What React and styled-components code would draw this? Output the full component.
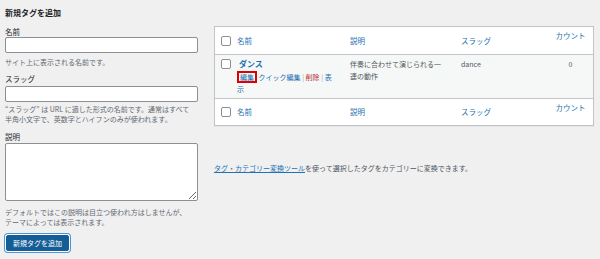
import React from 'react'
import styled, { createGlobalStyle } from 'styled-components'

const GlobalStyle = createGlobalStyle`
    html, body {
        margin: 0;
        padding: 0;
        background: #f0f0f1;
    }
    body {
        font-family: "Noto Sans CJK JP", "Noto Sans", sans-serif;
        color: #1d2327;
        width: 600px;
        height: 259px;
        overflow: hidden;
    }
`

const App = () => {
    return (
        <>
            <GlobalStyle />
            <Page>
                <FormCol>
                    <Heading>新規タグを追加</Heading>
                    <Field top={9}>
                        <Label>名前</Label>
                        <Input type="text" />
                        <Help top={4}>サイト上に表示される名前です。</Help>
                    </Field>
                    <Field top={7}>
                        <Label gap={2}>スラッグ</Label>
                        <Input type="text" />
                        <Help top={2}>
                            “スラッグ” は URL に適した形式の名前です。通常はすべて<br />
                            半角小文字で、英数字とハイフンのみが使われます。
                        </Help>
                    </Field>
                    <Field top={8}>
                        <Label gap={1}>説明</Label>
                        <TextArea />
                        <Help top={6}>
                            デフォルトではこの説明は目立つ使われ方はしませんが、<br />
                            テーマによっては表示されます。
                        </Help>
                    </Field>
                    <SubmitButton>新規タグを追加</SubmitButton>
                </FormCol>

                <ListCol>
                    <Table>
                        <HeadRow>
                            <CheckCell><Check /></CheckCell>
                            <HeadCell>名前</HeadCell>
                            <HeadCell>説明</HeadCell>
                            <HeadCell>スラッグ</HeadCell>
                            <CountHead>カウント</CountHead>
                        </HeadRow>
                        <BodyRow>
                            <CheckCell top><Check /></CheckCell>
                            <NameCell>
                                <RowTitle>ダンス</RowTitle>
                                <Actions>
                                    <Marked>編集</Marked>{' '}
                                    <ActionLink>クイック編集</ActionLink>
                                    <Sep> | </Sep>
                                    <ActionLink danger>削除</ActionLink>
                                    <Sep> | </Sep>
                                    <ActionLink>表<br />示</ActionLink>
                                </Actions>
                            </NameCell>
                            <TextCell>伴奏に合わせて演じられる一<br />連の動作</TextCell>
                            <TextCell>dance</TextCell>
                            <CountCell>0</CountCell>
                        </BodyRow>
                        <FootRow>
                            <CheckCell><Check /></CheckCell>
                            <HeadCell>名前</HeadCell>
                            <HeadCell>説明</HeadCell>
                            <HeadCell>スラッグ</HeadCell>
                            <CountHead>カウント</CountHead>
                        </FootRow>
                    </Table>
                    <Note>
                        <NoteLink>タグ・カテゴリー変換ツール</NoteLink>を使って選択したタグをカテゴリーに変換できます。
                    </Note>
                </ListCol>
            </Page>
        </>
    )
}

export default App


const Page = styled.div`
    display: flex;
    align-items: flex-start;
    padding: 8px 0 0 5px;
    gap: 16px;
`

const FormCol = styled.div`
    width: 193px;
    display: flex;
    flex-direction: column;
`

const Heading = styled.h2`
    margin: 0;
    font-size: 8px;
    line-height: 10px;
    font-weight: 700;
`

const Field = styled.div`
    display: flex;
    flex-direction: column;
    margin-top: ${props => props.top}px;
`

const Label = styled.label`
    font-size: 7.5px;
    line-height: 10px;
    margin-bottom: ${props => props.gap || 0}px;
`

const Input = styled.input`
    box-sizing: border-box;
    width: 193px;
    height: 16px;
    margin: 0;
    border: 1px solid #8c8f94;
    border-radius: 2px;
    background: #fff;
`

const TextArea = styled.textarea`
    box-sizing: border-box;
    width: 193px;
    height: 58px;
    margin: 0;
    border: 1px solid #8c8f94;
    border-radius: 2px;
    background: #fff;
    resize: vertical;
`

const Help = styled.p`
    margin: ${props => props.top}px 0 0;
    font-size: 7px;
    line-height: 10px;
    color: #646970;
    white-space: nowrap;
`

const SubmitButton = styled.button`
    align-self: flex-start;
    margin: 8px 0 0 1px;
    height: 16px;
    padding: 0 6px;
    border: 1px solid #135e96;
    border-radius: 2px;
    background: #135e96;
    color: #fff;
    font-family: inherit;
    font-size: 7px;
    line-height: 14px;
    box-shadow: 0 0 0 1px #fff, 0 0 0 2px #4f94d4;
`

const ListCol = styled.div`
    width: 380px;
    margin-top: 18px;
`

const Table = styled.div`
    background: #fff;
    border: 1px solid #c3c4c7;
    box-shadow: 0 1px 1px rgba(0, 0, 0, 0.04);
`

const Row = styled.div`
    display: grid;
    grid-template-columns: 18px 113px 111px 91px 1fr;
`

const HeadRow = styled(Row)`
    height: 27px;
    align-items: center;
    border-bottom: 1px solid #c3c4c7;
`

const FootRow = styled(Row)`
    height: 26px;
    align-items: center;
    border-top: 1px solid #c3c4c7;
`

const BodyRow = styled(Row)`
    height: 43px;
    background: #f6f7f7;
    align-items: start;
`

const CheckCell = styled.div`
    padding-left: 6px;
    padding-top: ${props => (props.top ? '4px' : '0')};
`

const Check = styled.span`
    display: block;
    box-sizing: border-box;
    width: 10px;
    height: 10px;
    border: 1px solid #8c8f94;
    border-radius: 2px;
    background: #fff;
`

const HeadCell = styled.div`
    padding-left: 4px;
    font-size: 7.5px;
    line-height: 10px;
    color: #2271b1;
`

const CountHead = styled(HeadCell)`
    padding-left: 0;
    text-align: center;
    align-self: start;
    margin-top: 4px;
`

const NameCell = styled.div`
    padding: 3px 0 0 4px;
`

const RowTitle = styled.div`
    padding-left: 2px;
    font-size: 8px;
    line-height: 11px;
    font-weight: 700;
    color: #2271b1;
`

const Actions = styled.div`
    margin-top: 2px;
    font-size: 7px;
    line-height: 12px;
    color: #2271b1;
`

const Marked = styled.span`
    display: inline-block;
    padding: 0 1px;
    line-height: 8px;
    border: 2px solid #e00000;
`

const ActionLink = styled.span`
    color: ${props => (props.danger ? '#b32d2e' : '#2271b1')};
`

const Sep = styled.span`
    color: #a7aaad;
`

const TextCell = styled.div`
    padding: 3px 0 0 4px;
    font-size: 7px;
    line-height: 12px;
    color: #50575e;
`

const CountCell = styled(TextCell)`
    padding-left: 0;
    text-align: center;
`

const Note = styled.p`
    margin: 37px 0 0;
    font-size: 7px;
    line-height: 10px;
    color: #50575e;
`

const NoteLink = styled.span`
    color: #2271b1;
    text-decoration: underline;
`
